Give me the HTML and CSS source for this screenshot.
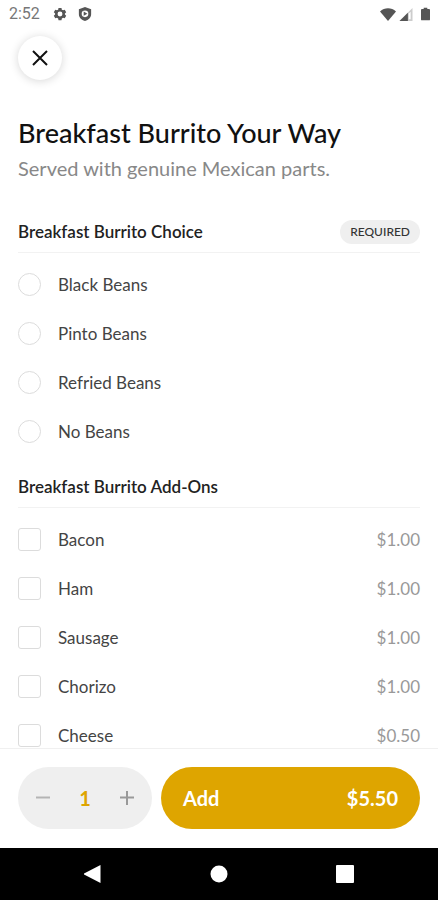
FILE: index.html
```html
<!DOCTYPE html>
<html lang="en">
<head>
<meta charset="utf-8">
<meta name="viewport" content="width=device-width, initial-scale=1">
<title>Breakfast Burrito Your Way</title>
<link rel="stylesheet" href="styles.css">
</head>
<body>
<div class="screen">
  <header class="status">
    <span class="clock">2:52</span>
    <svg class="status-icon" viewBox="0 0 16 16" aria-hidden="true"><path fill="#555" fill-rule="evenodd" d="M6.3 1h3.4l.4 2 1.4.8 1.9-.7 1.700 3L13.600 7.400v1.200l1.500 1.300-1.700 3-1.900-.7-1.400.8-.4 2H6.300l-.4-2-1.400-.8-1.900.7-1.700-3 1.500-1.300V7.400L.9 6.100l1.700-3 1.900.7L5.900 3zM8 5.200a2.800 2.800 0 1 0 0 5.600 2.800 2.800 0 0 0 0-5.600z"/></svg>
    <svg class="status-icon shield" viewBox="0 0 16 16" aria-hidden="true"><path fill="#555" fill-rule="evenodd" d="M8 0l7 2.500v5.700c0 3.900-2.900 6.500-7 7.800-4.100-1.300-7-3.900-7-7.800V2.500zM8 4a3.800 3.800 0 1 0 0 7.600A3.800 3.800 0 0 0 8 4z"/><path fill="#555" d="M6.500 5.200l4.200 2.400-4.200 2.400z"/></svg>
    <span class="spacer"></span>
    <svg class="wifi" viewBox="0 0 16 13" aria-hidden="true"><path fill="#555" d="M8 13L0 3.500C4.500-.8 11.500-.8 16 3.500z"/></svg>
    <svg class="signal" viewBox="0 0 14 14" aria-hidden="true"><path fill="#ccc" d="M0 14L14 0v14z"/><path fill="#555" d="M0 14l9-9v9z"/><path fill="#fff" d="M10 6l2-2v8h-2z"/></svg>
    <svg class="battery" viewBox="0 0 10 14" aria-hidden="true"><path fill="#555" d="M3 0h4v1.500h2a1 1 0 0 1 1 1V13a1 1 0 0 1-1 1H1a1 1 0 0 1-1-1V2.500a1 1 0 0 1 1-1h2z"/></svg>
  </header>

  <main class="content">
    <button class="close" type="button" aria-label="Close">
      <svg viewBox="0 0 16 16" aria-hidden="true"><path d="M1 1l14 14M15 1L1 15" stroke="#111" stroke-width="2" fill="none"/></svg>
    </button>
    <h1>Breakfast Burrito Your Way</h1>
    <p class="lead">Served with genuine Mexican parts.</p>

    <section class="group" aria-labelledby="choice">
      <div class="group-head"><h2 id="choice">Breakfast Burrito Choice</h2><span class="badge">REQUIRED</span></div>
      <label class="option"><input type="radio" name="choice"><span>Black Beans</span></label>
      <label class="option"><input type="radio" name="choice"><span>Pinto Beans</span></label>
      <label class="option"><input type="radio" name="choice"><span>Refried Beans</span></label>
      <label class="option"><input type="radio" name="choice"><span>No Beans</span></label>
    </section>

    <section class="group" aria-labelledby="addons">
      <div class="group-head"><h2 id="addons">Breakfast Burrito Add-Ons</h2></div>
      <label class="option"><input type="checkbox"><span>Bacon</span><span class="price">$1.00</span></label>
      <label class="option"><input type="checkbox"><span>Ham</span><span class="price">$1.00</span></label>
      <label class="option"><input type="checkbox"><span>Sausage</span><span class="price">$1.00</span></label>
      <label class="option"><input type="checkbox"><span>Chorizo</span><span class="price">$1.00</span></label>
      <label class="option"><input type="checkbox"><span>Cheese</span><span class="price">$0.50</span></label>
    </section>
  </main>

  <footer class="order">
    <div class="stepper">
      <button type="button" aria-label="Decrease quantity"><svg viewBox="0 0 14 14" aria-hidden="true"><path d="M0 6.500h14" stroke="#b4b4b4" stroke-width="2"/></svg></button>
      <span class="count">1</span>
      <button type="button" aria-label="Increase quantity"><svg viewBox="0 0 14 14" aria-hidden="true"><path d="M0 6.500h14M7 0v14" stroke="#999" stroke-width="2"/></svg></button>
    </div>
    <button class="add" type="button"><span>Add</span><span>$5.50</span></button>
  </footer>

  <nav class="system" aria-label="System">
    <button type="button" aria-label="Back"><svg viewBox="0 0 18 18" aria-hidden="true"><path fill="#fff" d="M16.500 0v18L0 9.600q-1-.6 0-1.200z"/></svg></button>
    <button type="button" aria-label="Home"><svg viewBox="0 0 18 18" aria-hidden="true"><circle cx="9" cy="9" r="8.500" fill="#fff"/></svg></button>
    <button type="button" aria-label="Recent apps"><svg viewBox="0 0 18 18" aria-hidden="true"><rect width="18" height="18" rx="1" fill="#fff"/></svg></button>
  </nav>
</div>
</body>
</html>
```
FILE: styles.css
```css
* { box-sizing: border-box; }
body { margin: 0; background: #fff; color: #444; font-family: Lato, "Liberation Sans", sans-serif; }
button { border: 0; padding: 0; background: none; font: inherit; color: inherit; cursor: pointer; }
svg { display: block; }
h1, h2, p { margin: 0; }

.screen { display: flex; flex-direction: column; height: 100vh; }

.status { flex: none; display: flex; align-items: center; height: 28px; padding: 0 8px 0 9px; }
.clock { width: 44px; font: 16px/20px Roboto, sans-serif; color: #777; }
.status-icon { width: 14px; height: 14px; }
.shield { margin-left: 11px; }
.spacer { flex: 1; }
.wifi { width: 16px; height: 13px; }
.signal { width: 14px; height: 13px; margin: 0 8px 0 3px; }
.battery { width: 9px; height: 14px; }

.content { flex: 1; min-height: 0; overflow: hidden; padding: 8px 18px 0; }
.close {
  display: grid; place-items: center; width: 44px; height: 44px; border-radius: 50%;
  background: #fff; box-shadow: 0 1px 10px rgba(0, 0, 0, .16);
}
.close svg { width: 16px; height: 16px; }

h1 { margin-top: 36px; font-size: 27px; line-height: 34px; font-weight: 500; color: #111; }
.lead { margin-top: 5px; font-size: 20px; line-height: 26px; color: #888; }

.group { margin-top: 31px; }
.group + .group { margin-top: 11px; }
.group-head {
  display: flex; align-items: center; justify-content: space-between;
  height: 41px; margin-bottom: 7px; border-bottom: 1px solid #f2f2f2;
}
h2 { font-size: 17px; line-height: 24px; font-weight: 600; color: #222; }
.badge { padding: 0 10px; border-radius: 12px; background: #efefef; font-size: 12px; line-height: 24px; font-weight: 500; color: #333; }

.option { display: flex; align-items: center; gap: 17px; height: 49px; font-size: 17px; }
.option input {
  appearance: none; flex: none; width: 23px; height: 23px; margin: 0;
  border: 1px solid #dcdcdc; border-radius: 3px; background: #fff;
}
.option input[type="radio"] { border-radius: 50%; }
.option input:checked { background: #dea500; }
.price { margin-left: auto; color: #999; }

.order { flex: none; display: flex; gap: 9px; padding: 18px 18px 19px; border-top: 1px solid #f0f0f0; }
.stepper {
  flex: none; width: 134px; display: flex; align-items: center; justify-content: space-between;
  height: 62px; padding: 0 18px; border-radius: 31px; background: #efefef;
}
.stepper svg { width: 14px; height: 14px; }
.count { font-size: 20px; font-weight: 700; color: #dea500; }
.add {
  flex: 1; display: flex; align-items: center; justify-content: space-between;
  height: 62px; padding: 0 22px; border-radius: 31px; background: #dea500;
  color: #fff; font-size: 20px; font-weight: 700;
}

.system { flex: none; display: flex; justify-content: center; gap: 108px; height: 52px; align-items: center; background: #000; }
.system svg { width: 18px; height: 18px; }
```
